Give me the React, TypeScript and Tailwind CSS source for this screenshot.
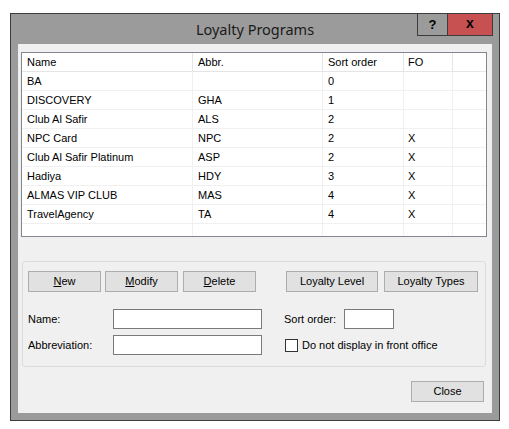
import React from 'react';

const rows = [
  { name: 'BA', abbr: '', sort: '0', fo: '' },
  { name: 'DISCOVERY', abbr: 'GHA', sort: '1', fo: '' },
  { name: 'Club Al Safir', abbr: 'ALS', sort: '2', fo: '' },
  { name: 'NPC Card', abbr: 'NPC', sort: '2', fo: 'X' },
  { name: 'Club Al Safir Platinum', abbr: 'ASP', sort: '2', fo: 'X' },
  { name: 'Hadiya', abbr: 'HDY', sort: '3', fo: 'X' },
  { name: 'ALMAS VIP CLUB', abbr: 'MAS', sort: '4', fo: 'X' },
  { name: 'TravelAgency', abbr: 'TA', sort: '4', fo: 'X' },
];

function WinButton({ className, children }: { className: string; children: React.ReactNode }) {
  return (
    <div
      className={`h-[21px] flex items-center justify-center bg-[#e1e1e1] border border-[#adadad] text-[11px] text-black ${className}`}
    >
      {children}
    </div>
  );
}

function Cells({ r, header }: { r: { name: string; abbr: string; sort: string; fo: string }; header?: boolean }) {
  const line = header ? 'border-[#e5e5e5]' : 'border-[#f0f0f0]';
  return (
    <div className={`flex h-[19px] border-b ${line}`}>
      <div className={`w-[171px] pl-[5px] flex items-center border-r ${line}`}>{r.name}</div>
      <div className={`w-[130px] pl-[5px] flex items-center border-r ${line}`}>{r.abbr}</div>
      <div className={`w-[81px] pl-[5px] flex items-center border-r ${line}`}>{r.sort}</div>
      <div className={`w-[49px] pl-[4px] flex items-center border-r ${line}`}>{r.fo}</div>
      <div className="flex-1" />
    </div>
  );
}

export default function App() {
  return (
    <div className="w-[509px] h-[429px] bg-white pt-[13px] pl-[10px] font-['Liberation_Sans',Arial,sans-serif] text-[11px] text-black">
      <div className="w-[490px] h-[408px] border border-[#3c3c3c] bg-[#9b9b9b] flex flex-col">
        {/* Title bar */}
        <div className="relative h-[30px] flex items-center justify-center">
          <span className="font-['Noto_Sans',sans-serif] text-[14.5px] text-[#1a1a1a] pt-[1px]">Loyalty Programs</span>
          <div className="absolute top-[-1px] right-[6px] flex">
            <div className="w-[30px] h-[23px] border border-[#3c3c3c] border-r-0 bg-[#9b9b9b] flex items-center justify-center text-[13px] font-bold text-black">
              ?
            </div>
            <div className="w-[46px] h-[23px] border border-[#3c3c3c] bg-[#c75050] flex items-center justify-center text-[14px] font-bold text-black pb-[2px]">
              x
            </div>
          </div>
        </div>

        {/* Client area */}
        <div className="mx-[7px] h-[369px] bg-[#f0f0f0] flex flex-col">
          {/* List view */}
          <div className="mt-[8px] ml-[3px] w-[466px] h-[185px] border border-[#828790] bg-white overflow-hidden">
            <Cells r={{ name: 'Name', abbr: 'Abbr.', sort: 'Sort order', fo: 'FO' }} header />
            {rows.map((r) => (
              <Cells key={r.name} r={r} />
            ))}
            <Cells r={{ name: '', abbr: '', sort: '', fo: '' }} />
          </div>

          {/* Group box */}
          <div className="mt-[24px] ml-[4px] w-[464px] h-[106px] border border-[#dcdcdc] rounded-[3px] pt-[9px] pl-[5px]">
            <div className="flex items-center">
              <WinButton className="w-[73px]"><span><u>N</u>ew</span></WinButton>
              <WinButton className="w-[73px] ml-[4px]"><span><u>M</u>odify</span></WinButton>
              <WinButton className="w-[73px] ml-[5px]"><span><u>D</u>elete</span></WinButton>
              <WinButton className="w-[92px] ml-[30px]">Loyalty Level</WinButton>
              <WinButton className="w-[94px] ml-[6px]">Loyalty Types</WinButton>
            </div>
            <div className="flex items-center mt-[17px]">
              <span className="w-[85px]">Name:</span>
              <div className="w-[149px] h-[20px] bg-white border border-[#7a7a7a]" />
              <span className="ml-[22px] w-[60px]">Sort order:</span>
              <div className="w-[50px] h-[20px] bg-white border border-[#7a7a7a]" />
            </div>
            <div className="flex items-center mt-[6px]">
              <span className="w-[85px]">Abbreviation:</span>
              <div className="w-[149px] h-[20px] bg-white border border-[#7a7a7a]" />
              <div className="ml-[23px] w-[13px] h-[13px] bg-white border border-[#333]" />
              <span className="ml-[4px]">Do not display in front office</span>
            </div>
          </div>

          {/* Close */}
          <div className="mt-[14px] flex justify-end pr-[8px]">
            <WinButton className="w-[73px] border-[#707070]">Close</WinButton>
          </div>
        </div>
      </div>
    </div>
  );
}
